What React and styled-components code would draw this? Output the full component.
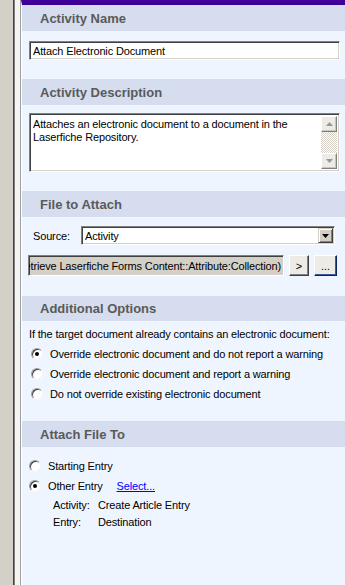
import React from 'react';
import styled, { createGlobalStyle } from 'styled-components';

const GlobalStyle = createGlobalStyle`
  html, body {
    margin: 0;
    padding: 0;
    background: #d4d0c8;
  }
  body {
    font-family: "Liberation Sans", Arial, sans-serif;
    font-size: 11px;
    letter-spacing: -0.15px;
    color: #000;
  }
`;

const Window = styled.div`
  display: flex;
  height: 585px;
  overflow: hidden;
`;

const Gutter = styled.div`
  width: 13px;
  background: #d4d0c8;
`;

const Splitter = styled.div`
  width: 5px;
  background: #f4f4f2;
  border-left: 1px solid #404040;
  box-shadow: inset 1px 0 0 #808080;
  padding-left: 1px;
  border-right: 1px solid #a0a0a0;
`;

const Panel = styled.div`
  flex: 1;
  background: #eef5ff;
  border-top: 5px solid #3e0098;
  border-left: 1px solid #ffffff;
  display: flex;
  flex-direction: column;
`;

const Header = styled.div`
  height: ${p => p.h || 26}px;
  display: flex;
  align-items: center;
  padding-left: 18px;
  font-size: 13px;
  font-weight: bold;
  letter-spacing: 0;
  color: #5a5a5a;
  background: #d5ddef;
`;

const Body = styled.div`
  padding: ${p => p.pad};
  display: flex;
  flex-direction: column;
  gap: ${p => p.gap || 0}px;
`;

const sunken = `
  border-top: 1px solid #808080;
  border-left: 1px solid #808080;
  border-right: 1px solid #ffffff;
  border-bottom: 1px solid #ffffff;
  box-shadow: inset 1px 1px 0 #404040, inset -1px -1px 0 #d4d0c8;
`;

const TextBox = styled.div`
  ${sunken}
  height: 19px;
  box-sizing: border-box;
  background: #fff;
  display: flex;
  align-items: center;
  padding-left: 3px;
  white-space: nowrap;
  overflow: hidden;
`;

const MemoBox = styled.div`
  ${sunken}
  height: 59px;
  box-sizing: border-box;
  background: #fff;
  display: flex;
  padding: 2px;
`;

const MemoText = styled.div`
  flex: 1;
  line-height: 13px;
  padding: 2px 0 0 1px;
`;

const ScrollTrack = styled.div`
  width: 16px;
  display: flex;
  flex-direction: column;
  justify-content: space-between;
  background-color: #ffffff;
  background-image: repeating-conic-gradient(#d4d0c8 0 25%, #ffffff 0 50%);
  background-size: 2px 2px;
`;

const ScrollButton = styled.div`
  width: 16px;
  height: 16px;
  box-sizing: border-box;
  background: #ecebe6;
  border: 1px solid;
  border-color: #ffffff #808080 #808080 #ffffff;
  box-shadow: inset -1px -1px 0 #c8c6c0;
  display: flex;
  align-items: center;
  justify-content: center;
`;

const Arrow = ({ down, color = '#9a9892' }) => (
  <svg width="7" height="4" viewBox="0 0 7 4">
    <path d={down ? 'M0 0h7L3.5 4z' : 'M0 4h7L3.5 0z'} fill={color} />
  </svg>
);

const FieldRow = styled.div`
  display: flex;
  align-items: center;
  height: ${p => p.h}px;
  margin-left: ${p => p.ml || 0}px;
`;

const Label = styled.span`
  width: ${p => p.w}px;
  flex: none;
`;

const Select = styled.div`
  ${sunken}
  width: 254px;
  height: 19px;
  box-sizing: border-box;
  background: #fff;
  display: flex;
  align-items: center;
  padding: 0 1px 0 3px;
  span { flex: 1; }
`;

const DropButton = styled.div`
  width: 15px;
  height: 15px;
  box-sizing: border-box;
  background: #d4d0c8;
  border: 1px solid;
  border-color: #d4d0c8 #404040 #404040 #d4d0c8;
  box-shadow: inset 1px 1px 0 #fff, inset -1px -1px 0 #808080;
  display: flex;
  align-items: center;
  justify-content: center;
`;

const ReadOnlyBox = styled.div`
  ${sunken}
  width: 256px;
  height: 21px;
  box-sizing: border-box;
  background: #d4d0c8;
  display: flex;
  align-items: center;
  justify-content: flex-end;
  padding-right: 2px;
  white-space: nowrap;
  overflow: hidden;
`;

const PushButton = styled.button`
  width: ${p => p.w}px;
  height: 21px;
  margin-left: ${p => p.ml}px;
  padding: 0 0 3px;
  box-sizing: border-box;
  font: 11px "Liberation Sans", Arial, sans-serif;
  color: #000;
  background: #ecebe6;
  border: 1px solid;
  border-color: #ffffff ${p => (p.focus ? '#0a246a' : '#404040')} ${p => (p.focus ? '#0a246a' : '#404040')} #ffffff;
  box-shadow: inset -1px -1px 0 ${p => (p.focus ? '#3a5a9a' : '#808080')};
  display: flex;
  align-items: flex-end;
  justify-content: center;
`;

const Note = styled.div`
  height: 20px;
  line-height: 20px;
  padding-left: 7px;
`;

const OptionRow = styled.label`
  display: flex;
  align-items: center;
  height: 20px;
  padding-left: ${p => p.indent}px;
  gap: 7px;
`;

const Radio = styled.span`
  width: 12px;
  height: 12px;
  box-sizing: border-box;
  border-radius: 50%;
  border: 1px solid;
  border-color: #9a9a9a #f4f4f4 #f4f4f4 #9a9a9a;
  background: #fff;
  box-shadow: inset 1px 1px 0 #404040;
  display: flex;
  align-items: center;
  justify-content: center;
  flex: none;
  &::after {
    content: '';
    width: 4px;
    height: 4px;
    border-radius: 50%;
    background: ${p => (p.checked ? '#000' : 'transparent')};
  }
`;

const LinkText = styled.a`
  color: #0000ff;
  text-decoration: underline;
  margin-left: 7px;
  cursor: pointer;
`;

const Detail = styled.div`
  display: grid;
  grid-template-columns: 45px auto;
  grid-auto-rows: 17px;
  align-items: center;
  padding-left: 31px;
`;

const options = [
  { text: 'Override electronic document and do not report a warning', checked: true },
  { text: 'Override electronic document and report a warning', checked: false },
  { text: 'Do not override existing electronic document', checked: false },
];

export default function App() {
  return (
    <>
      <GlobalStyle />
      <Window>
        <Gutter />
        <Splitter />
        <Panel>
          <Header>Activity Name</Header>
          <Body pad="10px 5px 19px 7px">
            <TextBox>Attach Electronic Document</TextBox>
          </Body>

          <Header>Activity Description</Header>
          <Body pad="8px 5px 19px 7px">
            <MemoBox>
              <MemoText>
                Attaches an electronic document to a document in the Laserfiche Repository.
              </MemoText>
              <ScrollTrack>
                <ScrollButton><Arrow /></ScrollButton>
                <ScrollButton><Arrow down /></ScrollButton>
              </ScrollTrack>
            </MemoBox>
          </Body>

          <Header>File to Attach</Header>
          <Body pad="9px 0 20px 11px" gap={10}>
            <FieldRow h={19}>
              <Label w={48}>Source:</Label>
              <Select>
                <span>Activity</span>
                <DropButton><Arrow down color="#000" /></DropButton>
              </Select>
            </FieldRow>
            <FieldRow h={21} ml={-5}>
              <ReadOnlyBox>%(Retrieve Laserfiche Forms Content::Attribute:Collection)</ReadOnlyBox>
              <PushButton w={20} ml={5}>&gt;</PushButton>
              <PushButton w={23} ml={5} focus>...</PushButton>
            </FieldRow>
          </Body>

          <Header h={25}>Additional Options</Header>
          <Body pad="3px 0 17px 0">
            <Note>If the target document already contains an electronic document:</Note>
            {options.map(o => (
              <OptionRow key={o.text} indent={9}>
                <Radio checked={o.checked} />
                {o.text}
              </OptionRow>
            ))}
          </Body>

          <Header>Attach File To</Header>
          <Body pad="9px 0 0 0">
            <OptionRow indent={7}>
              <Radio />
              Starting Entry
            </OptionRow>
            <OptionRow indent={7}>
              <Radio checked />
              Other Entry
              <LinkText>Select...</LinkText>
            </OptionRow>
            <Detail>
              <span>Activity:</span>
              <span>Create Article Entry</span>
              <span>Entry:</span>
              <span>Destination</span>
            </Detail>
          </Body>
        </Panel>
      </Window>
    </>
  );
}
